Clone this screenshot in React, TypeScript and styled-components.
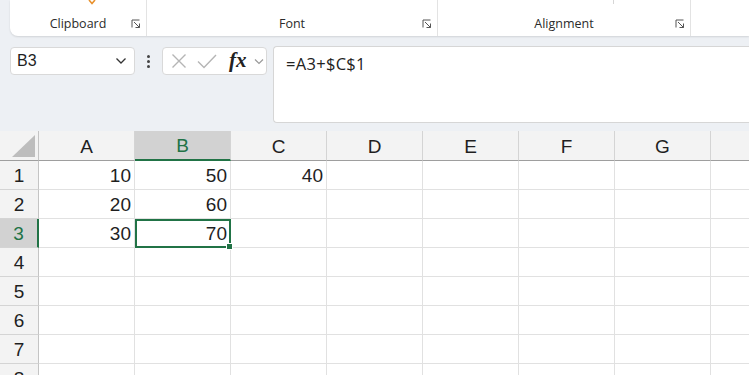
import React from 'react'
import styled, { createGlobalStyle } from 'styled-components'

const Colors = {
  page: '#edf0f4',
  panel: '#ffffff',
  line: '#e1e1e1',
  headerBg: '#f3f3f3',
  headerSel: '#d2d2d2',
  green: '#217346',
  text: '#1f1f1f',
}

const UI_FONT = '"Open Sans", "Noto Sans", sans-serif'
const GRID_FONT = '"Liberation Sans", Arial, sans-serif'

const COLS = ['A', 'B', 'C', 'D', 'E', 'F', 'G', 'H']
const ROWS = [1, 2, 3, 4, 5, 6, 7, 8]
const DATA: Record<string, string> = {
  A1: '10',
  B1: '50',
  C1: '40',
  A2: '20',
  B2: '60',
  A3: '30',
  B3: '70',
}

const GlobalStyle = createGlobalStyle`
  html, body {
    margin: 0;
    padding: 0;
    background: ${Colors.page};
    overflow: hidden;
  }
  * { box-sizing: border-box; }
`

function Launcher() {
  return (
    <LauncherIcon width="10" height="10" viewBox="0 0 10 10">
      <path d="M1 8.5V1h7.5" fill="none" stroke="#555" strokeWidth="1" />
      <path d="M3 3l5.5 5.5M4.5 8.5h4v-4" fill="none" stroke="#555" strokeWidth="1" />
    </LauncherIcon>
  )
}

export default function App() {
  return (
    <>
      <GlobalStyle />
      <Page>
        <Ribbon>
          <Group $w={137}>
            <PasteTip width="10" height="5" viewBox="0 0 10 5">
              <path d="M2 0l3 3.5L8 0" fill="none" stroke="#e8912d" strokeWidth="1.6" />
            </PasteTip>
            <GroupLabel>Clipboard</GroupLabel>
            <Launcher />
          </Group>
          <Group $w={291}>
            <GroupLabel>Font</GroupLabel>
            <Launcher />
          </Group>
          <Group $w={253}>
            <TopTick />
            <GroupLabel>Alignment</GroupLabel>
            <Launcher />
          </Group>
          <Group $w={120} $last />
        </Ribbon>

        <FormulaRow>
          <NameBox>
            <span>B3</span>
            <svg width="12" height="8" viewBox="0 0 12 8">
              <path d="M1.5 1.5l4.5 4.5 4.5-4.5" fill="none" stroke="#333" strokeWidth="1.3" />
            </svg>
          </NameBox>
          <Dots>
            <i />
            <i />
            <i />
          </Dots>
          <FxBox>
            <svg width="16" height="16" viewBox="0 0 16 16">
              <path d="M1.5 1.5l13 13M14.5 1.5l-13 13" stroke="#b5b5b5" strokeWidth="1.4" />
            </svg>
            <svg width="20" height="15" viewBox="0 0 20 15">
              <path d="M1 7.5l6 6L19 1" fill="none" stroke="#b5b5b5" strokeWidth="1.4" />
            </svg>
            <FxText>fx</FxText>
            <svg width="10" height="7" viewBox="0 0 10 7">
              <path d="M1 1.5l4 4 4-4" fill="none" stroke="#9a9a9a" strokeWidth="1.2" />
            </svg>
          </FxBox>
          <FormulaBar>=A3+$C$1</FormulaBar>
        </FormulaRow>

        <Sheet>
          <Corner>
            <svg width="23" height="22" viewBox="0 0 23 22">
              <path d="M23 0V22H0Z" fill="#bdbdbd" />
            </svg>
          </Corner>
          {COLS.map((c) => (
            <ColHead key={c} $sel={c === 'B'}>
              {c}
            </ColHead>
          ))}
          {ROWS.map((r) => (
            <React.Fragment key={r}>
              <RowHead $sel={r === 3}>{r}</RowHead>
              {COLS.map((c) => (
                <Cell key={c + r} $active={c === 'B' && r === 3}>
                  {DATA[c + r]}
                </Cell>
              ))}
            </React.Fragment>
          ))}
        </Sheet>
      </Page>
    </>
  )
}

const Page = styled.div`
  width: 749px;
  height: 375px;
  background: ${Colors.page};
  overflow: hidden;
`

const Ribbon = styled.div`
  display: flex;
  height: 36px;
  margin-left: 10px;
  background: ${Colors.panel};
  border-bottom-left-radius: 8px;
  box-shadow: 0 1px 2px rgba(0, 0, 0, 0.12);
`

const Group = styled.div<{ $w: number; $last?: boolean }>`
  position: relative;
  display: flex;
  align-items: flex-end;
  justify-content: center;
  flex: 0 0 ${(p) => p.$w}px;
  padding-bottom: 3px;
  border-right: ${(p) => (p.$last ? 'none' : '1px solid #e3e3e3')};
`

const GroupLabel = styled.span`
  font-family: ${UI_FONT};
  font-size: 12.5px;
  line-height: 18px;
  color: #2b2b2b;
`

const LauncherIcon = styled.svg`
  position: absolute;
  right: 5px;
  bottom: 7px;
`

const PasteTip = styled.svg`
  position: absolute;
  left: 77px;
  top: 0;
`

const TopTick = styled.div`
  position: absolute;
  left: 175px;
  top: 0;
  width: 1px;
  height: 4px;
  background: #d6d6d6;
`

const FormulaRow = styled.div`
  display: flex;
  align-items: flex-start;
  height: 78px;
  margin-top: 10px;
  padding-left: 10px;
`

const NameBox = styled.div`
  display: flex;
  align-items: center;
  justify-content: space-between;
  width: 125px;
  height: 28px;
  margin-top: 1px;
  padding: 0 7px 0 6px;
  background: ${Colors.panel};
  border: 1px solid #d9d9d9;
  border-radius: 4px;
  font-family: ${GRID_FONT};
  font-size: 16px;
  color: ${Colors.text};
`

const Dots = styled.div`
  display: flex;
  flex-direction: column;
  gap: 2px;
  width: 27px;
  height: 28px;
  align-items: center;
  justify-content: center;
  margin-top: 1px;

  i {
    display: block;
    width: 3px;
    height: 3px;
    border-radius: 50%;
    background: #444;
  }
`

const FxBox = styled.div`
  display: flex;
  align-items: center;
  gap: 10px;
  width: 105px;
  height: 28px;
  margin-top: 1px;
  padding-left: 8px;
  background: ${Colors.panel};
  border: 1px solid #d9d9d9;
  border-radius: 4px;
`

const FxText = styled.span`
  font-family: 'Liberation Serif', 'DejaVu Serif', serif;
  font-style: italic;
  font-weight: 700;
  font-size: 21px;
  line-height: 1;
  color: #222;
  margin: -2px -3px 0 2px;
`

const FormulaBar = styled.div`
  flex: 1;
  height: 77px;
  margin-left: 6px;
  padding: 6px 12px;
  background: ${Colors.panel};
  border: 1px solid #d6d6d6;
  border-right: none;
  border-radius: 4px 0 0 4px;
  font-family: ${UI_FONT};
  font-size: 16.5px;
  letter-spacing: 0.3px;
  line-height: 22px;
  color: #222;
`

const Sheet = styled.div`
  display: grid;
  grid-template-columns: 39px repeat(8, 96px);
  grid-template-rows: 30px repeat(8, 29px);
  margin-top: 7px;
  background: ${Colors.panel};
  font-family: ${GRID_FONT};
  font-size: 19px;
  color: ${Colors.text};
`

const Corner = styled.div`
  display: flex;
  align-items: flex-end;
  justify-content: flex-end;
  padding: 0 3px 3px 0;
  background: ${Colors.headerBg};
  border-right: 1px solid #c4c4c4;
  border-bottom: 1px solid #9e9e9e;
`

const ColHead = styled.div<{ $sel?: boolean }>`
  display: flex;
  align-items: center;
  justify-content: center;
  padding-top: 2px;
  background: ${(p) => (p.$sel ? Colors.headerSel : Colors.headerBg)};
  color: ${(p) => (p.$sel ? Colors.green : Colors.text)};
  border-right: 1px solid #d4d4d4;
  border-bottom: ${(p) => (p.$sel ? `2px solid ${Colors.green}` : '1px solid #9e9e9e')};
`

const RowHead = styled.div<{ $sel?: boolean }>`
  display: flex;
  align-items: center;
  justify-content: center;
  padding-top: 1px;
  background: ${(p) => (p.$sel ? Colors.headerSel : Colors.headerBg)};
  color: ${(p) => (p.$sel ? Colors.green : Colors.text)};
  border-bottom: 1px solid #d4d4d4;
  border-right: ${(p) => (p.$sel ? `2px solid ${Colors.green}` : '1px solid #c4c4c4')};
`

const Cell = styled.div<{ $active?: boolean }>`
  position: relative;
  display: flex;
  align-items: center;
  justify-content: flex-end;
  padding: 2px 3px 0 0;
  border-right: 1px solid ${Colors.line};
  border-bottom: 1px solid ${Colors.line};

  ${(p) =>
    p.$active &&
    `
    outline: 2px solid ${Colors.green};
    outline-offset: -2px;
    &::after {
      content: '';
      position: absolute;
      right: -3px;
      bottom: -3px;
      width: 5px;
      height: 5px;
      background: ${Colors.green};
      border: 1px solid #fff;
      z-index: 2;
    }
  `}
`
